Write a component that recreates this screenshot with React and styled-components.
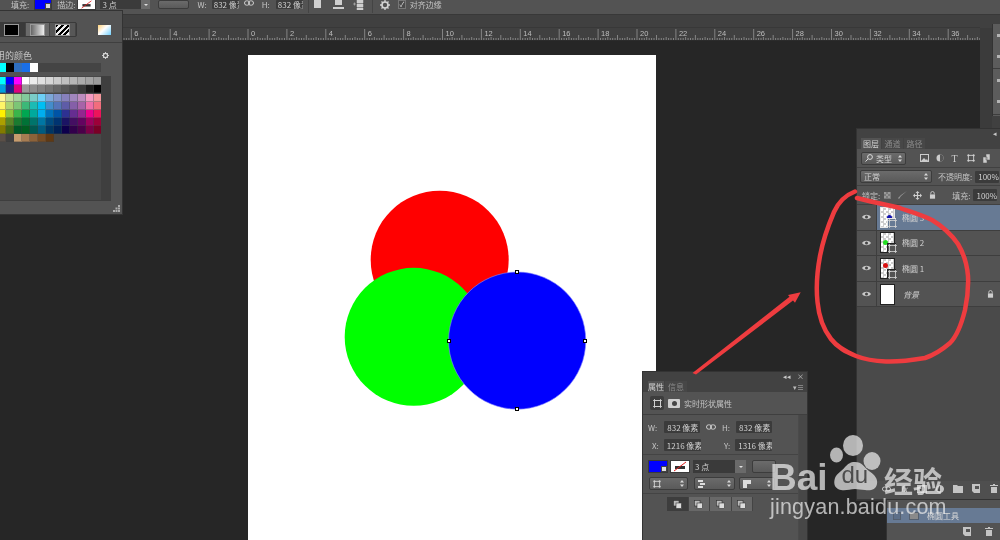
import React from 'react';
import styled, { createGlobalStyle } from 'styled-components';

const Global = createGlobalStyle`
  html, body { margin: 0; padding: 0; background: #262626; }
  body { width: 1000px; height: 540px; overflow: hidden; }
  * { box-sizing: border-box; }
`;

const FONT = `"Noto Sans CJK SC", "Noto Sans", sans-serif`;

const Root = styled.div`
  position: relative; width: 1000px; height: 540px; overflow: hidden;
  display: flex; flex-direction: column; background: #262626;
  font-family: ${FONT}; font-size: 8px; color: #c8c8c8; filter: blur(0.35px);
`;

/* ---------- shared controls ---------- */
const Label = styled.span`
  flex: none; font-size: ${p => p.$size || 8}px; line-height: ${p => p.$lh || 9}px; white-space: nowrap;
  margin-left: ${p => p.$ml || 0}px; color: ${p => p.$color || '#c4c4c4'}; font-style: ${p => (p.$i ? 'italic' : 'normal')};
`;
const ValueBox = styled.span`
  flex: none; display: flex; align-items: center; overflow: hidden; white-space: nowrap;
  width: ${p => p.$w}px; height: ${p => p.$h || 12}px; margin-left: ${p => p.$ml || 0}px;
  padding-left: ${p => p.$pl ?? 3}px; background: #3b3b3b; color: #d0d0d0;
  font-size: 8px; line-height: 9px; border-radius: 1px;
`;
const Select = styled.span`
  flex: none; display: flex; align-items: center; justify-content: space-between;
  width: ${p => p.$w}px; height: ${p => p.$h || 13}px; margin-left: ${p => p.$ml || 0}px; padding: 0 3px;
  background: linear-gradient(#6b6b6b, #5a5a5a); border: 1px solid #3c3c3c; border-radius: 2px;
  color: #d2d2d2; font-size: 8px; line-height: 9px; white-space: nowrap;
`;
const SelectText = styled.span`display: flex; align-items: center; gap: 3px;`;
const ColorChip = styled.span`
  position: relative; flex: none; display: block; width: ${p => p.$w}px; height: ${p => p.$h}px;
  margin-left: ${p => p.$ml || 0}px; background: ${p => p.$c}; outline: 1px solid #3a3a3a;
  &::after { content: ''; position: absolute; right: 0; bottom: 0; width: 4px; height: 4px; background: #ddd; border: 1px solid #444; }
`;
const StrokeChip = styled.span`
  flex: none; display: block; width: ${p => p.$w}px; height: ${p => p.$h}px; margin-left: ${p => p.$ml || 0}px;
  line-height: 0; outline: 1px solid #3a3a3a;
`;
const Glyph = styled.span`
  flex: none; display: flex; margin-left: ${p => p.$ml || 0}px; line-height: 0; color: ${p => p.$color || '#c8c8c8'};
`;

const Updown = () => (
  <svg width="4" height="7" viewBox="0 0 4 7"><path d="M2 0l2 2.6H0zM2 7L0 4.4h4z" fill="#d8d8d8" /></svg>
);
const Stroke = ({ w, h }) => (
  <svg width={w} height={h} viewBox="0 0 18 11" style={{ display: 'block', background: '#fff' }}>
    <path d="M4 5h10v3H4z" fill="#333" />
    <path d="M3 10L15 1" stroke="#e02020" strokeWidth="1" />
  </svg>
);
const Link = ({ w = 10 }) => (
  <svg width={w} height="6" viewBox="0 0 10 6" fill="none" stroke="#cfcfcf" strokeWidth="1">
    <rect x="0.5" y="0.8" width="5" height="4.4" rx="2.2" /><rect x="4.5" y="0.8" width="5" height="4.4" rx="2.2" />
  </svg>
);
const Gear = ({ s = 10 }) => (
  <svg width={s} height={s} viewBox="0 0 10 10">
    <circle cx="5" cy="5" r="3" fill="none" stroke="#d4d4d4" strokeWidth="1.6" />
    <path d="M5 0v2M5 8v2M0 5h2M8 5h2M1.5 1.5L3 3M7 7l1.5 1.5M8.5 1.5L7 3M3 7L1.5 8.5" stroke="#d4d4d4" strokeWidth="1.3" />
  </svg>
);
const Eye = () => (
  <svg width="9" height="6" viewBox="0 0 9 6">
    <path d="M0 3C2 0 7 0 9 3 7 6 2 6 0 3z" fill="#c8c8c8" /><circle cx="4.5" cy="3" r="1.5" fill="#444" />
  </svg>
);
const LockIcon = ({ s = 8 }) => (
  <svg width={s} height={s * 1.1} viewBox="0 0 8 9">
    <path d="M2 4V2.6a2 2 0 014 0V4" fill="none" stroke="#cfcfcf" /><rect x="1" y="4" width="6" height="5" fill="#cfcfcf" />
  </svg>
);
const ShapeBox = ({ s = 9, sw = 1 }) => (
  <svg width={s} height={s} viewBox="0 0 9 9" fill="none" stroke="#d0d0d0" strokeWidth={sw}>
    <rect x="1.5" y="1.5" width="6" height="6" />
    <path d="M0 1.5h3M1.5 0v3M6 1.5h3M7.5 0v3M0 7.5h3M1.5 6v3M6 7.5h3M7.5 6v3" strokeWidth="0.8" />
  </svg>
);

/* ---------- options bar ---------- */
const OptionsBar = styled.header`
  flex: none; height: 15px; display: flex; align-items: flex-start; padding-left: 11px;
  background: #535353; border-bottom: 1px solid #383838; overflow: hidden;
`;
const BarDivider = styled.i`flex: none; width: 1px; height: 13px; margin-left: ${p => p.$ml}px; background: #444;`;
const Check = styled.span`
  flex: none; display: flex; align-items: center; justify-content: center; width: 8px; height: 9px; margin-left: ${p => p.$ml}px;
  background: #4a4a4a; border: 1px solid #777; color: #ddd; font-size: 7px; line-height: 7px;
`;
const BarCombo = styled.span`
  flex: none; display: flex; width: 50px; height: 9px; margin-left: 5px; background: #3b3b3b; color: #cfcfcf;
  padding-left: 2px; line-height: 9px; justify-content: space-between;
`;
const BarComboArrow = styled.span`
  width: 9px; background: #6b6b6b; display: flex; align-items: center; justify-content: center;
  &::after { content: ''; border: 2px solid transparent; border-top: 2px solid #ddd; margin-top: 2px; }
`;

/* ---------- main area ---------- */
const Main = styled.div`flex: 1; min-height: 0; display: flex;`;
const Stage = styled.div`width: 980px; display: flex; flex-direction: column;`;
const TabStrip = styled.div`flex: none; height: 13px; background: #404040; border-bottom: 1px solid #383838;`;
const RulerBar = styled.div`flex: none; height: 13px; background: #404040; line-height: 0; border-bottom: 1px solid #2b2b2b;`;
const Canvas = styled.main`flex: 1; min-height: 0; background: #262626; padding: 14px 0 0 248px; overflow: hidden;`;
const Doc = styled.div`width: 408px; height: 485px; background: #fff; line-height: 0;`;
const Rail = styled.div`width: 20px; display: flex; background: #404040;`;
const ScrollCol = styled.div`width: 12px; margin-top: 13px; background: #3b3b3b;`;
const Dock = styled.div`width: 8px; height: 92px; margin-top: 9px; background: #5c5c5c; border-left: 1px solid #333;`;
const DockGroup = styled.div`
  height: ${p => p.$h}px; border-bottom: 1px solid #3d3d3d; display: flex; flex-direction: column; align-items: flex-end; gap: 18px; padding-top: 10px;
  &::before, &::after { content: ''; display: block; width: 3px; height: 3px; background: #b4b4b4; }
`;

const Ruler = () => {
  const step = 38.9, origin = 248;
  let ticks = '';
  const labels = [];
  for (let k = -7; k <= 19; k++) {
    const x = origin + k * step;
    ticks += `M${x} 1V12`;
    for (let i = 1; i < 16; i++) {
      const tx = x + (i * step) / 16;
      const len = i === 8 ? 5 : i % 4 === 0 ? 3 : 2;
      ticks += `M${tx.toFixed(1)} ${12 - len}V12`;
    }
    if (x > 120 && x < 970) labels.push({ x: x + 3, t: Math.abs(k * 2) });
  }
  return (
    <svg width="980" height="12" viewBox="0 0 980 12">
      <path d={ticks} stroke="#a0a0a0" strokeWidth="0.7" fill="none" />
      {labels.map(l => (
        <text key={l.x} x={l.x} y="8" fontSize="7.5" fill="#bdbdbd" fontFamily="'Liberation Sans', sans-serif">{l.t}</text>
      ))}
    </svg>
  );
};

const Artwork = () => (
  <svg width="408" height="485" viewBox="248 55 408 485">
    <circle cx="439.7" cy="259.7" r="69" fill="#ff0000" />
    <circle cx="413.7" cy="336.8" r="69" fill="#00ff00" />
    <circle cx="517.2" cy="340.6" r="68.6" fill="#0000ff" stroke="#8a8aff" strokeWidth="0.6" />
    {[[517, 272], [517, 409], [449, 341], [585, 341]].map(([x, y]) => (
      <rect key={x + y} x={x - 1.5} y={y - 1.5} width="3" height="3" fill="#fff" stroke="#000" strokeWidth="1" />
    ))}
  </svg>
);

/* ---------- floating windows ---------- */
const Floating = styled.section`
  position: absolute; left: ${p => p.$l}px; top: ${p => p.$t}px; width: ${p => p.$w}px; height: ${p => p.$h}px;
  display: flex; flex-direction: column; background: #535353; box-shadow: 0 0 0 1px #333; overflow: hidden;
`;
const TitleBar = styled.div`
  flex: none; height: 9px; display: flex; align-items: center; justify-content: flex-end; gap: 6px; padding-right: 3px;
  background: #424242; color: #c8c8c8; font-size: 7px; line-height: 9px;
`;
const Tabs = styled.div`flex: none; height: 11px; display: flex; padding-left: ${p => p.$pl}px; background: #424242;`;
const Tab = styled.span`
  width: ${p => p.$w || 20}px; display: flex; align-items: center; justify-content: center;
  background: ${p => (p.$on ? '#535353' : '#474747')}; color: ${p => (p.$on ? '#cfcfcf' : '#8a8a8a')};
  font-size: 8px; line-height: 9px; margin-right: 1px;
`;
const TabMenu = styled.span`margin-left: auto; padding-right: 3px; display: flex; align-items: center; color: #bbb; font-size: 7px;`;

/* swatches */
const SwatchPanel = styled(Floating)`padding-left: 36px;`;
const ModeRow = styled.div`
  flex: none; height: 32px; margin-left: -36px; padding: 11px 0 0 0; display: flex; align-items: flex-start;
  border-bottom: 1px solid #3f3f3f; background: #535353;
`;
const ModeGroup = styled.div`
  flex: none; width: 115px; height: 15px; display: flex; background: #3e3e3e; border-radius: 2px; border: 1px solid #3a3a3a;
`;
const ModeBtn = styled.span`
  flex: none; width: ${p => p.$w}px; display: flex; align-items: center; justify-content: ${p => (p.$end ? 'flex-end' : 'center')};
  padding-right: ${p => (p.$end ? 6 : 0)}px; background: ${p => p.$bg}; border-right: 1px solid #444;
`;
const ModeFill = styled.span`display: block; width: 15px; height: 12px; background: ${p => p.$bg}; border: 1px solid #999;`;
const Rainbow = styled.span`
  flex: none; width: 13px; height: 10px; margin: 3px 0 0 21px;
  background: linear-gradient(135deg, #ffd27a, #fff 45%, #6fd0ff), linear-gradient(#f0a, #0cf);
`;
const RecentHead = styled.div`flex: none; height: 20px; display: flex; align-items: center; width: 113px; justify-content: space-between; padding-right: 2px; padding-top: 5px;`;
const RecentBar = styled.div`flex: none; width: 103px; height: 9px; display: flex; background: #444;`;
const Chip = styled.i`flex: none; width: 8px; background: ${p => p.$c};`;
const PaletteWrap = styled.div`flex: none; display: flex; width: 113px; height: 125px; margin-top: 4px; background: #474747; border-bottom: 1px solid #3e3e3e;`;
const PaletteGrid = styled.div`
  flex: none; width: 103px; display: grid; grid-template-columns: repeat(13, 8px); grid-template-rows: 8px 9px repeat(6, 8px);
  align-content: start; padding-top: 1px;
`;
const Cell = styled.i`display: block; height: 8px; background: ${p => p.$c}; box-shadow: inset -1px -1px 0 rgba(60,60,60,.35);`;
const PaletteScroll = styled.div`flex: none; width: 10px; background: #3f3f3f;`;
const Grip = styled.div`flex: 1; display: flex; justify-content: flex-end; align-items: flex-end; padding: 0 1px 2px 0; width: 159px; margin-left: -36px;`;

const PAL = [
  '#00ffff #0000ff #ff00ff #ffffff #ececec #e0e0e0 #d6d6d6 #cbcbcb #c0c0c0 #b6b6b6 #acacac #a3a3a3 #9a9a9a',
  '#00a0e0 #1e1e8c #e0007f #9a9a9a #8c8c8c #808080 #737373 #666666 #595959 #4b4b4b #3a3a3a #1e1e1e #000000',
  '#fff799 #c4df9b #a3d39c #82ca9c #7accc8 #6dcff6 #7da7d9 #8393ca #8781bd #a186be #bd8cbf #f49ac1 #f5989d',
  '#fff568 #acd372 #7cc576 #3cb878 #1cbbb4 #00bff3 #448ccb #5574b9 #5e5ca7 #855fa8 #a763a8 #ef6ea8 #f26d7d',
  '#fff200 #8dc63f #39b54a #00a651 #00a99d #00aeef #0072bc #0054a6 #2e3192 #662d91 #92278f #ec008c #ed145b',
  '#aba000 #598527 #1a7b30 #007236 #00746b #0076a3 #004b80 #003471 #1b1464 #440e62 #630460 #9e005d #9e0039',
  '#827b00 #406618 #005826 #005e20 #005952 #005b7f #003663 #002157 #0d004c #32004b #4b0049 #7b0046 #7a0026',
  '#5a4f47 #3f3f3f #c69c6d #a67c52 #8c6239 #754c24 #603913',
].map(r => r.split(' '));

/* properties */
const PropHead = styled.div`
  flex: none; height: 23px; display: flex; align-items: center; padding-left: 7px; gap: 3px;
  border-bottom: 1px solid #3f3f3f;
`;
const HeadBtn = styled.span`
  flex: none; width: 14px; height: 14px; display: flex; align-items: center; justify-content: center;
  background: ${p => (p.$on ? '#3d3d3d' : 'transparent')}; border-radius: 2px;
`;
const MaskGlyph = styled.span`width: 12px; height: 9px; background: #cfcfcf; border-radius: 1px; display: flex; align-items: center; justify-content: center; &::after { content: ''; width: 5px; height: 5px; border-radius: 50%; background: #444; }`;
const PropBody = styled.div`flex: 1; min-height: 0; display: flex;`;
const PropMain = styled.div`flex: none; width: 155px; display: flex; flex-direction: column;`;
const PropScroll = styled.div`flex: none; width: 9px; background: #474747; border-left: 1px solid #4a4a4a;`;
const Metrics = styled.div`
  flex: none; height: 40px; padding: 6px 0 0 5px; display: grid; grid-template-columns: 58px 72px; grid-template-rows: 12px 12px; row-gap: 6px;
  border-bottom: 1px solid #444;
`;
const Metric = styled.div`display: flex; align-items: center;`;
const ControlRow = styled.div`flex: none; display: flex; align-items: center; height: ${p => p.$h}px; padding: ${p => p.$pt || 0}px 0 0 6px;`;
const RowRule = styled.div`flex: none; height: 3px; border-bottom: 1px solid #444;`;
const SegGroup = styled.div`flex: none; display: flex; height: 14px; margin: 3px 0 0 24px;`;
const Seg = styled.span`
  width: 21.5px; display: flex; align-items: center; justify-content: center; background: ${p => (p.$on ? '#3d3d3d' : '#686868')};
  border-right: 1px solid #444;
`;
const Overlap = () => (
  <svg width="9" height="9" viewBox="0 0 9 9">
    <rect x="0.5" y="0.5" width="5.5" height="5.5" fill="#bbb" stroke="#333" strokeWidth="0.6" />
    <rect x="3" y="3" width="5.5" height="5.5" fill="#ddd" stroke="#333" strokeWidth="0.6" />
  </svg>
);
const MiniCombo = styled.span`
  flex: none; display: flex; width: 53px; height: 13px; margin-left: 4px; background: #3a3a3a; align-items: center; justify-content: space-between;
  padding-left: 2px; color: #d0d0d0; font-size: 8px; line-height: 9px;
`;
const MiniArrow = styled.span`
  width: 11px; height: 13px; background: #6a6a6a; display: flex; align-items: center; justify-content: center;
  &::after { content: ''; border: 2px solid transparent; border-top: 2px solid #e0e0e0; margin-top: 2px; }
`;

/* layers */
const LayerTool = styled.div`
  flex: none; height: ${p => p.$h}px; display: flex; align-items: center; padding-left: ${p => p.$pl || 4}px;
  border-bottom: 1px solid #414141;
`;
const IconSlot = styled.span`flex: none; width: ${p => p.$w}px; margin-left: ${p => p.$ml || 0}px; display: flex; justify-content: center; color: #ccc; font-size: ${p => p.$fs || 9}px; line-height: 9px; font-family: "Liberation Serif", serif;`;
const LayerList = styled.div`flex: 1; min-height: 0; background: #4a4a4a;`;
const LayerRow = styled.div`
  height: 25.6px; display: flex; align-items: center; background: ${p => (p.$on ? '#677a94' : '#535353')};
  border-bottom: 1px solid #3e3e3e;
`;
const EyeCell = styled.span`flex: none; width: 20px; height: 100%; display: flex; align-items: center; justify-content: center; background: #535353; border-right: 1px solid #3e3e3e;`;
const Thumb = styled.span`
  position: relative; flex: none; width: 15px; height: 21px; margin-left: 3px; border: 1px solid ${p => (p.$on ? '#e8e8e8' : '#222')}; overflow: hidden;
  background-color: #fff; ${p => !p.$plain && `background-image: conic-gradient(#cdcdcd 25%, #fff 0 50%, #cdcdcd 0 75%, #fff 0); background-size: 5px 5px;`}
`;
const Dot = styled.i`position: absolute; left: ${p => p.$x}px; top: ${p => p.$y}px; width: 5px; height: 5px; border-radius: 50%; background: ${p => p.$c};`;
const MaskCorner = styled.span`
  position: relative; flex: none; width: 9px; height: 9px; margin: 12px 0 0 -7px; background: ${p => (p.$on ? '#677a94' : '#535353')}; line-height: 0;
  box-shadow: -1px -1px 0 ${p => (p.$on ? '#e8e8e8' : '#222')};
`;
const LayerName = styled.span`flex: none; margin-left: ${p => p.$ml}px; font-size: 8px; line-height: 9px; color: #cfcfcf; font-style: ${p => (p.$i ? 'italic' : 'normal')};`;
const RowEnd = styled.span`margin-left: auto; padding-right: 6px; display: flex;`;
const LayerFooter = styled.div`flex: none; height: 19px; display: flex; align-items: center; padding: 0 0 3px 20px; background: #4f4f4f; border-bottom: 1px solid #383838;`;
const FootSlot = styled.span`flex: none; width: 18px; display: flex; justify-content: center; line-height: 0;`;
const PathRow = styled.div`
  flex: none; height: 15px; margin-top: 8px; display: flex; align-items: center; padding-left: 6px; gap: 8px; background: #677a94;
  color: #d8d8d8; font-size: 8px; line-height: 9px;
`;
const PathBox = styled.i`flex: none; display: block; width: ${p => p.$w}px; height: 8px; background: ${p => p.$c}; border: 1px solid #55606f;`;
const PathFoot = styled.div`flex: none; height: 16px; display: flex; align-items: center; justify-content: flex-end; gap: 4px; padding-right: 2px;`;

/* overlays */
const Scribble = styled.svg`position: absolute; left: 0; top: 0; pointer-events: none;`;
const Watermark = styled.div`
  position: absolute; left: 770px; top: 434px; width: 180px; display: flex; flex-direction: column; color: rgba(235,235,235,.72); pointer-events: none;
`;
const MarkTop = styled.div`display: flex; align-items: flex-end; height: 58px;`;
const MarkBai = styled.span`font: bold 37px/37px "Liberation Sans", sans-serif; margin-bottom: -4px; width: 60px;`;
const MarkZh = styled.span`font: 700 29px/30px ${FONT}; margin-left: 3px; margin-bottom: -3px;`;
const MarkUrl = styled.span`font: 21.5px/24px "Liberation Sans", sans-serif; letter-spacing: 0.2px; margin-top: 3px; white-space: nowrap;`;

const LAYERS = [
  { name: '椭圆 3', dot: '#1010b0', x: 6, y: 7, on: true },
  { name: '椭圆 2', dot: '#22dd22', x: 2, y: 7 },
  { name: '椭圆 1', dot: '#d81010', x: 2, y: 4 },
];

const Paw = () => (
  <svg width="51" height="58" viewBox="0 0 51 58">
    <ellipse cx="6.500" cy="21" rx="6.500" ry="7.500" fill="currentColor" />
    <ellipse cx="23" cy="11.500" rx="10" ry="10.500" fill="currentColor" />
    <ellipse cx="42" cy="27" rx="8.500" ry="9" fill="currentColor" />
    <path d="M25 28C32 28 34 33 39 37C45 41 48 45 47 50C46 56 40 57 35 56C31 56 28 55 25 55C20 55 16 57 11 56C5 55 3 50 5 44C7 39 12 37 15 33C18 30 20 28 25 28Z" fill="currentColor" />
    <text x="11.500" y="49" fontSize="24" fontFamily="'Liberation Sans', sans-serif" fill="#4c4c4c">du</text>
  </svg>
);

const FOOT_ICONS = [
  <Link w={9} key="link" />,
  <Label $i key="fx">fx</Label>,
  <svg key="mask" width="10" height="8" viewBox="0 0 10 8"><rect width="10" height="8" fill="#c4c4c4" /><circle cx="5" cy="4" r="2.400" fill="#444" /></svg>,
  <svg key="adj" width="8" height="8" viewBox="0 0 8 8"><circle cx="4" cy="4" r="3.500" fill="none" stroke="#c4c4c4" /><path d="M4 .5a3.500 3.500 0 010 7z" fill="#c4c4c4" /></svg>,
  <svg key="folder" width="10" height="8" viewBox="0 0 10 8"><path d="M0 0h4l1 1h5v7H0z" fill="#c4c4c4" /></svg>,
  <svg key="new" width="8" height="9" viewBox="0 0 8 9"><path d="M0 0h8v9H2L0 7z" fill="#c4c4c4" /><path d="M3 2h4v3H3z" fill="#555" /></svg>,
  <svg key="trash" width="8" height="9" viewBox="0 0 8 9"><path d="M0 1h8v1H0zM3 0h2v1H3zM1 3h6v6H1z" fill="#c4c4c4" /></svg>,
];

export default function App() {
  return (
    <Root>
      <Global />
      <OptionsBar>
        <Label>填充:</Label>
        <ColorChip $c="#0000ff" $w={16} $h={9} $ml={6} />
        <Label $ml={6}>描边:</Label>
        <StrokeChip $w={17} $h={9} $ml={3}><Stroke w={17} h={9} /></StrokeChip>
        <BarCombo>3 点<BarComboArrow /></BarCombo>
        <Select $w={31} $h={9} $ml={8} />
        <Label $ml={8}>W:</Label>
        <ValueBox $w={27} $h={9} $ml={5} $pl={2}>832 像素</ValueBox>
        <Glyph $ml={5}><Link /></Glyph>
        <Label $ml={8}>H:</Label>
        <ValueBox $w={27} $h={9} $ml={6} $pl={2}>832 像素</ValueBox>
        <BarDivider $ml={5} />
        <Glyph $ml={5}><svg width="8" height="9" viewBox="0 0 8 9"><rect width="7" height="8" y="0" fill="#cfcfcf" /></svg></Glyph>
        <Glyph $ml={11}><svg width="11" height="10" viewBox="0 0 11 10"><path d="M2 0h7v5H2zM0 7h11v2H0z" fill="#cfcfcf" /></svg></Glyph>
        <Glyph $ml={9}><svg width="11" height="10" viewBox="0 0 11 10"><path d="M0 4h3M1.500 2.500v3M4 0h6v3H4zM4 4h6v3H4zM4 8h6v2H4z" stroke="#cfcfcf" fill="#cfcfcf" strokeWidth="0.5" /></svg></Glyph>
        <BarDivider $ml={8} />
        <Glyph $ml={7}><Gear s={10} /></Glyph>
        <Check $ml={8}>✓</Check>
        <Label $ml={4}>对齐边缘</Label>
      </OptionsBar>

      <Main>
        <Stage>
          <TabStrip />
          <RulerBar><Ruler /></RulerBar>
          <Canvas><Doc><Artwork /></Doc></Canvas>
        </Stage>
        <Rail>
          <ScrollCol />
          <Dock><DockGroup $h={45} /><DockGroup $h={46} /></Dock>
        </Rail>
      </Main>

      <SwatchPanel $l={-38} $t={11} $w={160} $h={203}>
        <ModeRow>
          <ModeGroup>
            <ModeBtn $w={63} $end $bg="#3a3a3a"><ModeFill $bg="#000" /></ModeBtn>
            <ModeBtn $w={24} $bg="#6a6a6a"><ModeFill $bg="linear-gradient(90deg,#666,#eee)" /></ModeBtn>
            <ModeBtn $w={26} $bg="#575757"><ModeFill $bg="repeating-linear-gradient(135deg,#000 0 2px,#eee 2px 4px)" /></ModeBtn>
          </ModeGroup>
          <Rainbow />
        </ModeRow>
        <RecentHead>
          <Label $size={9} $lh={11} $ml={-11}>使用的颜色</Label>
          <Gear s={7} />
        </RecentHead>
        <RecentBar>
          {['#00ffff', '#000000', '#2f6fc0', '#1a6fe8', '#ffffff'].map(c => <Chip key={c} $c={c} />)}
        </RecentBar>
        <PaletteWrap>
          <PaletteGrid>
            {PAL.flatMap((row, r) => row.map((c, i) => <Cell key={r + '-' + i} $c={c} />))}
          </PaletteGrid>
          <PaletteScroll />
        </PaletteWrap>
        <Grip>
          <svg width="7" height="7" viewBox="0 0 7 7"><path d="M5 0h2v2H5zM2.500 2.500h2v2h-2zM5 2.500h2v2H5zM0 5h2v2H0zM2.500 5h2v2h-2zM5 5h2v2H5z" fill="#aaa" /></svg>
        </Grip>
      </SwatchPanel>

      <Floating $l={643} $t={372} $w={164} $h={168}>
        <TitleBar><span>◂◂</span><span>×</span></TitleBar>
        <Tabs $pl={5}>
          <Tab $on $w={16}>属性</Tab><Tab $w={22}>信息</Tab>
          <TabMenu>▾≡</TabMenu>
        </Tabs>
        <PropHead>
          <HeadBtn $on><ShapeBox s={9} /></HeadBtn>
          <HeadBtn><MaskGlyph /></HeadBtn>
          <Label>实时形状属性</Label>
        </PropHead>
        <PropBody>
          <PropMain>
            <Metrics>
              <Metric><Label>W:</Label><ValueBox $w={36} $ml={7}>832 像素</ValueBox></Metric>
              <Metric><Glyph><Link /></Glyph><Label $ml={6}>H:</Label><ValueBox $w={36} $ml={6}>832 像素</ValueBox></Metric>
              <Metric><Label $ml={4}>X:</Label><ValueBox $w={37} $ml={5}>1216 像素</ValueBox></Metric>
              <Metric><Label $ml={18}>Y:</Label><ValueBox $w={37} $ml={5}>1316 像素</ValueBox></Metric>
            </Metrics>
            <ControlRow $h={21} $pt={2}>
              <ColorChip $c="#0000ff" $w={18} $h={11} />
              <StrokeChip $w={18} $h={11} $ml={4}><Stroke w={18} h={11} /></StrokeChip>
              <MiniCombo>3 点<MiniArrow /></MiniCombo>
              <Select $w={24} $ml={6} />
            </ControlRow>
            <ControlRow $h={15}>
              <Select $w={39}><ShapeBox s={8} /><Updown /></Select>
              <Select $w={41} $ml={6}><Glyph><svg width="7" height="8" viewBox="0 0 7 8"><path d="M0 0h5v2H0zM2 3h5v2H2zM0 6h5v2H0z" fill="#ddd" /></svg></Glyph><Updown /></Select>
              <Select $w={36} $ml={4}><Glyph><svg width="8" height="8" viewBox="0 0 8 8"><path d="M0 0h8v4H4v4H0z" fill="#ddd" /></svg></Glyph><Updown /></Select>
            </ControlRow>
            <RowRule />
            <SegGroup>
              <Seg $on><Overlap /></Seg><Seg><Overlap /></Seg><Seg><Overlap /></Seg><Seg><Overlap /></Seg>
            </SegGroup>
          </PropMain>
          <PropScroll />
        </PropBody>
      </Floating>

      <Floating $l={857} $t={129} $w={143} $h={371}>
        <TitleBar><span>◂</span></TitleBar>
        <Tabs $pl={4}>
          <Tab $on $w={20}>图层</Tab><Tab $w={21}>通道</Tab><Tab $w={21}>路径</Tab>
        </Tabs>
        <LayerTool $h={19}>
          <Select $w={45}>
            <SelectText>
              <svg width="8" height="8" viewBox="0 0 8 8" fill="none" stroke="#ddd"><circle cx="5" cy="3" r="2.400" /><path d="M3 5L.5 7.500" /></svg>
              类型
            </SelectText>
            <Updown />
          </Select>
          <IconSlot $w={15} $ml={11}><svg width="9" height="8" viewBox="0 0 9 8"><rect x=".5" y=".5" width="8" height="7" fill="none" stroke="#ccc" /><path d="M1 7l3-3 2 2 1-1 1 2z" fill="#ccc" /></svg></IconSlot>
          <IconSlot $w={15}><svg width="8" height="8" viewBox="0 0 8 8"><circle cx="4" cy="4" r="3.500" fill="#ccc" /><path d="M4 .5a3.500 3.500 0 010 7z" fill="#555" /></svg></IconSlot>
          <IconSlot $w={15} $fs={10}>T</IconSlot>
          <IconSlot $w={17}><ShapeBox s={8} /></IconSlot>
          <IconSlot $w={16}><svg width="8" height="9" viewBox="0 0 8 9"><path d="M3 0h4v6H3zM0 3h4v6H0z" fill="#ccc" stroke="#555" strokeWidth="0.5" /></svg></IconSlot>
        </LayerTool>
        <LayerTool $h={18} $pl={3}>
          <Select $w={72}><span>正常</span><Updown /></Select>
          <Label $ml={6}>不透明度:</Label>
          <ValueBox $w={24} $ml={3}>100%</ValueBox>
        </LayerTool>
        <LayerTool $h={19} $pl={5}>
          <Label>锁定:</Label>
          <IconSlot $w={15}><svg width="7" height="7" viewBox="0 0 7 7"><rect width="7" height="7" fill="#7a7a7a" /><path d="M0 0h2v2H0zM4 0h2v2H4zM2 2h2v2H2zM0 4h2v2H0zM4 4h2v2H4z" fill="#999" /></svg></IconSlot>
          <IconSlot $w={15}><svg width="9" height="8" viewBox="0 0 9 8"><path d="M9 0L3 5 1 8 0 7l3-3z" fill="#999" /></svg></IconSlot>
          <IconSlot $w={15}><svg width="9" height="9" viewBox="0 0 9 9"><path d="M4.500 0l2 2h-1.400v1.900H7V2.500l2 2-2 2V5.100H5.100V7H6.500l-2 2-2-2h1.400V5.100H2v1.400l-2-2 2-2v1.400h1.900V2H2.500z" fill="#cfcfcf" /></svg></IconSlot>
          <IconSlot $w={15}><LockIcon s={7} /></IconSlot>
          <Label $ml={12}>填充:</Label>
          <ValueBox $w={24} $ml={3}>100%</ValueBox>
        </LayerTool>
        <LayerList>
          {LAYERS.map(l => (
            <LayerRow key={l.name} $on={l.on}>
              <EyeCell><Eye /></EyeCell>
              <Thumb $on={l.on}><Dot $c={l.dot} $x={l.x} $y={l.y} /></Thumb>
              <MaskCorner $on={l.on}><ShapeBox s={9} sw={0.8} /></MaskCorner>
              <LayerName $ml={5}>{l.name}</LayerName>
            </LayerRow>
          ))}
          <LayerRow>
            <EyeCell><Eye /></EyeCell>
            <Thumb $plain />
            <LayerName $i $ml={8}>背景</LayerName>
            <RowEnd><LockIcon s={7} /></RowEnd>
          </LayerRow>
        </LayerList>
        <LayerFooter>
          {FOOT_ICONS.map(icon => <FootSlot key={icon.key}>{icon}</FootSlot>)}
        </LayerFooter>
      </Floating>

      <Floating $l={887} $t={500} $w={113} $h={40}>
        <PathRow>
          <PathBox $w={8} $c="#5d6f88" />
          <PathBox $w={10} $c="#8a8a8a" />
          <span>椭圆工具</span>
        </PathRow>
        <PathFoot>
          {FOOT_ICONS.slice(5).map(icon => <FootSlot key={icon.key}>{icon}</FootSlot>)}
        </PathFoot>
      </Floating>

      <Scribble width="1000" height="540" viewBox="0 0 1000 540">
        <path
          d="M855 191.500C846 195 838 203 834 212C828 226 823 240 820 256C817 272 816 288 817.500 302C819 318 824 330 831 339C838 348 846 352 856 356C866 360 874 361 886 361.500C900 362 913 360 925 358C934 355 943 349 950 343C958 335 962 322 965 310C968 296 968.500 286 968 276C967 264 964 254 958 244C951 234 942 226 932 220C922 215 911 212 900 208C886 204 870 202 857 198"
          fill="none" stroke="#ee3c3f" strokeWidth="4.500" strokeLinecap="round" strokeLinejoin="round"
        />
        <path d="M692.500 373L789.500 296.800L788 295L800.700 292.300L795 302.700L793 300.600L696 374.500Z" fill="#ee3c3f" />
      </Scribble>

      <Watermark>
        <MarkTop>
          <MarkBai>Bai</MarkBai>
          <Paw />
          <MarkZh>经验</MarkZh>
        </MarkTop>
        <MarkUrl>jingyan.baidu.com</MarkUrl>
      </Watermark>
    </Root>
  );
}
